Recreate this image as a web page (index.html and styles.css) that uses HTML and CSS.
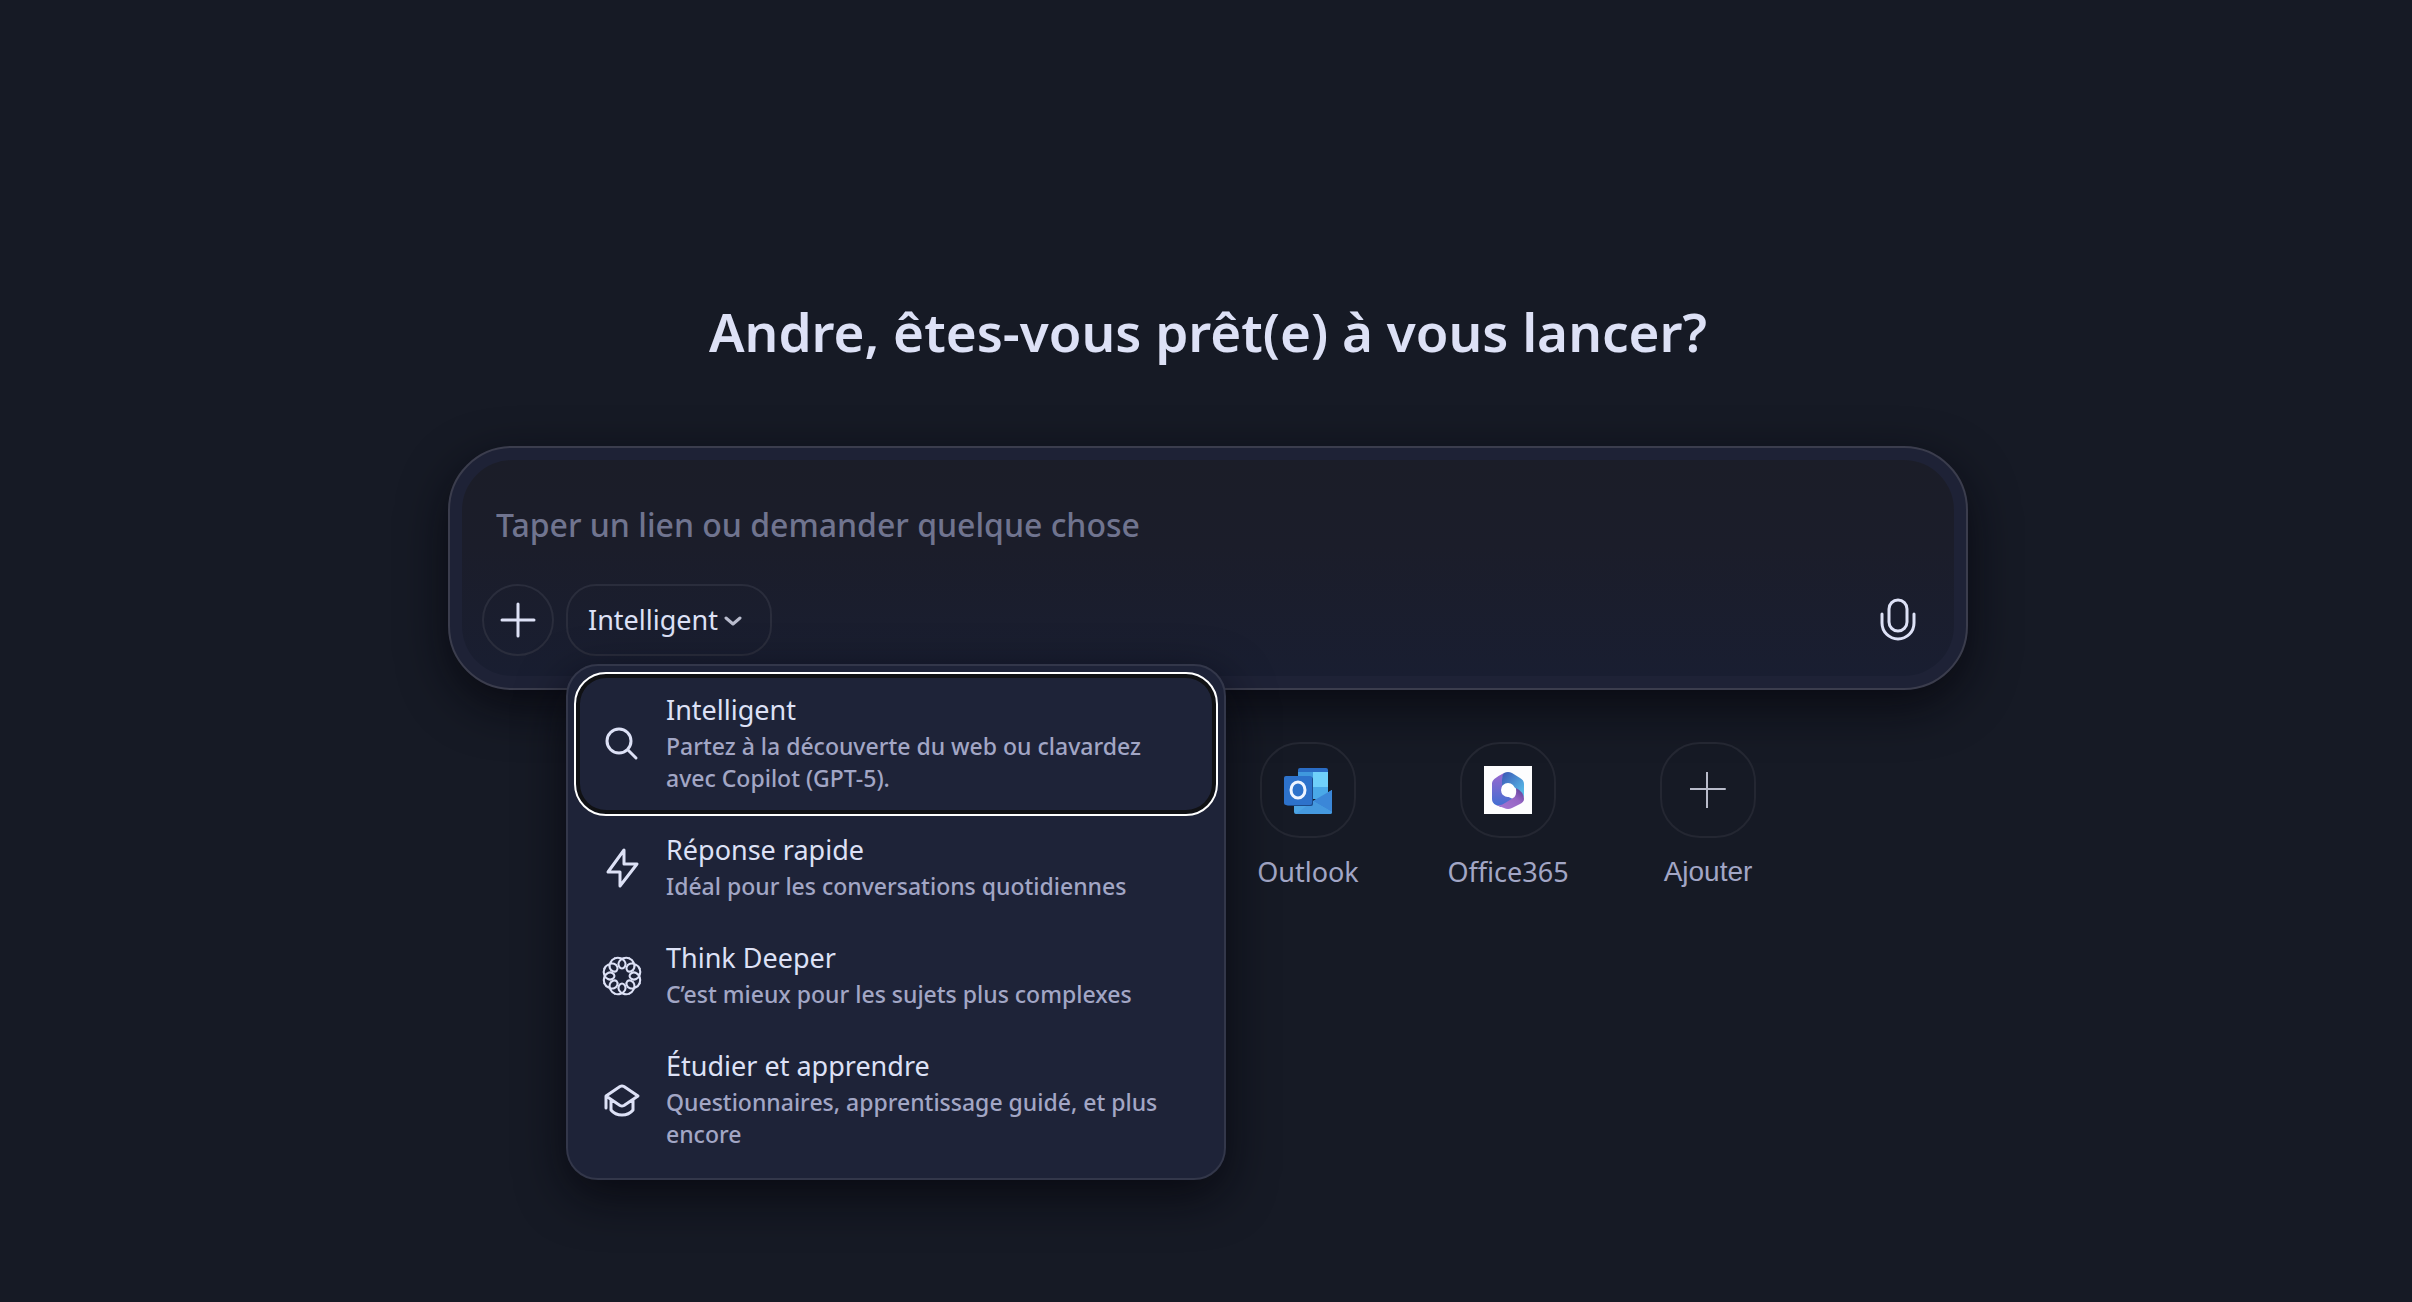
FILE: index.html
```html
<!DOCTYPE html>
<html lang="fr">
<head>
<meta charset="utf-8">
<meta name="viewport" content="width=device-width, initial-scale=1">
<title>Nouvel onglet</title>
<link rel="stylesheet" href="styles.css">
</head>
<body>
<main class="page">
  <h1 class="greeting">Andre, êtes-vous prêt(e) à vous lancer?</h1>

  <form class="composer">
    <div class="composer-inner">
      <input class="prompt" type="text" aria-label="Taper un lien ou demander quelque chose" placeholder="Taper un lien ou demander quelque chose">
      <div class="toolbar">
        <button class="add-button" type="button" aria-label="Ajouter un fichier">
          <svg width="36" height="36" viewBox="0 0 36 36" fill="none" stroke="currentColor" stroke-width="3" stroke-linecap="round"><path d="M18 2v32M2 18h32"/></svg>
        </button>
        <div class="mode">
          <button class="mode-button" type="button" aria-haspopup="menu" aria-expanded="true">
            Intelligent
            <svg width="18" height="18" viewBox="0 0 18 18" fill="none" stroke="#b9bccd" stroke-width="3" stroke-linecap="round" stroke-linejoin="round"><path d="M2 7l7 6 7-6"/></svg>
          </button>
          <div class="menu" role="menu">
            <button class="item is-focused" type="button" role="menuitem">
              <svg class="item-icon" viewBox="0 0 44 44"><circle cx="19" cy="19" r="12"/><path d="M28 28l8 8"/></svg>
              <span class="item-text"><span class="item-title">Intelligent</span><span class="item-desc">Partez à la découverte du web ou clavardez avec Copilot (GPT-5).</span></span>
            </button>
            <button class="item" type="button" role="menuitem">
              <svg class="item-icon" viewBox="0 0 44 44"><path d="M24 4L8 26h12v14l17-22H24z"/></svg>
              <span class="item-text"><span class="item-title">Réponse rapide</span><span class="item-desc">Idéal pour les conversations quotidiennes</span></span>
            </button>
            <button class="item" type="button" role="menuitem">
              <svg class="item-icon item-icon-fine" viewBox="-21 -21 42 42">
                <path id="loop" d="M16.8-7C18.4-3.200 16.600 1.500 13.500 2.900C10.500 4.400 7.200 2.400 7.200 0C7.200-2.400 10.500-4.400 13.500-2.900C16.600-1.500 18.400 3.200 16.800 7"/>
                <use href="#loop" transform="rotate(45)"/>
                <use href="#loop" transform="rotate(90)"/>
                <use href="#loop" transform="rotate(135)"/>
                <use href="#loop" transform="rotate(180)"/>
                <use href="#loop" transform="rotate(225)"/>
                <use href="#loop" transform="rotate(270)"/>
                <use href="#loop" transform="rotate(315)"/>
              </svg>
              <span class="item-text"><span class="item-title">Think Deeper</span><span class="item-desc">C’est mieux pour les sujets plus complexes</span></span>
            </button>
            <button class="item" type="button" role="menuitem">
              <svg class="item-icon" viewBox="0 0 44 44"><path d="M20 8.500q2-1 4 0L38 18 24 27.500q-2 1-4 0L6 18zM6 18v12M11 22v10q4 5 11 5t11-5V22"/></svg>
              <span class="item-text"><span class="item-title">Étudier et apprendre</span><span class="item-desc">Questionnaires, apprentissage guidé, et plus encore</span></span>
            </button>
          </div>
        </div>
        <button class="mic-button" type="button" aria-label="Parler">
          <svg width="40" height="44" viewBox="0 0 40 44" fill="none" stroke="currentColor" stroke-width="3" stroke-linecap="round"><rect x="11" y="2" width="18" height="31" rx="9"/><path d="M4 16v9a16 16 0 0 0 32 0v-9"/></svg>
        </button>
      </div>
    </div>
  </form>

  <nav class="shortcuts" aria-label="Raccourcis">
    <a class="shortcut shortcut-first" href="#outlook">
      <span class="tile">
        <svg width="48" height="48" viewBox="0 0 48 48">
          <path d="M14 4q0-2 2-2h26q2 0 2 2v26H14z" fill="#2a6cc4"/>
          <path d="M14 6h15v15H14z" fill="#3f98dd"/><path d="M29 6h15v15H29z" fill="#6fd0fa"/>
          <path d="M14 21h15v12H14z" fill="#2b77cb"/><path d="M29 21h15v12H29z" fill="#4aa9e8"/>
          <path d="M10 24l19 11 19-11v22q0 2-2 2H12q-2 0-2-2z" fill="#4ba3e3"/>
          <path d="M48 24v22L29 35z" fill="#3b87d8"/><path d="M29 35l19 11q0 2-2 2H12z" fill="#4599df"/>
          <rect x="2" y="11" width="27" height="29" rx="2" fill="#1c4b8c"/>
          <rect y="10" width="28" height="29" rx="2" fill="#2d72cb"/>
          <ellipse cx="14" cy="24" rx="7" ry="8" fill="none" stroke="#eef4ff" stroke-width="3"/>
        </svg>
      </span>
      <span class="label">Outlook</span>
    </a>
    <a class="shortcut" href="#office365">
      <span class="tile">
        <svg width="48" height="48" viewBox="0 0 48 48">
          <defs>
            <linearGradient id="violet" x1="0" y1="0" x2="0" y2="1"><stop offset="0" stop-color="#9a68cf"/><stop offset="1" stop-color="#3f6fd2"/></linearGradient>
            <linearGradient id="sky" x1="0" y1="0" x2="1" y2="1"><stop offset="0" stop-color="#3b56b4"/><stop offset="1" stop-color="#5ccaf0"/></linearGradient>
            <linearGradient id="orchid" x1="0" y1="1" x2="1" y2="0"><stop offset="0" stop-color="#a777d4"/><stop offset=".6" stop-color="#9565c4"/><stop offset="1" stop-color="#54398f"/></linearGradient>
          </defs>
          <path d="M0 0h48v48H0z" fill="#fdfdfe"/>
          <path d="M20 7Q8 13 8 17v16q0 4 4 6l5 2 12-8-11-5V17q0-6 2-10z" fill="url(#violet)"/>
          <path d="M20 7q4-2 8 0l8 5q4 2 4 6v14q-1-5-6-8l-7-5q-4-2-9 1v-6q0-5 2-7z" fill="url(#sky)"/>
          <path d="M12 39q5 1 9-2l8-5q4-2 3-10 8 4 8 11 0 3-4 5l-8 4q-4 2-8 0z" fill="url(#orchid)"/>
          <circle cx="24" cy="24" r="7" fill="#fff"/>
        </svg>
      </span>
      <span class="label">Office365</span>
    </a>
    <button class="shortcut" type="button">
      <span class="tile">
        <svg width="36" height="36" viewBox="0 0 36 36" fill="none" stroke="#b9bccb" stroke-width="2" stroke-linecap="round"><path d="M17 0v36M0 17h35"/></svg>
      </span>
      <span class="label label-plain">Ajouter</span>
    </button>
  </nav>
</main>
</body>
</html>
```

FILE: styles.css
```css
* { box-sizing: border-box; }

body {
  margin: 0;
  min-height: 100vh;
  background: #161a25;
  color: #dde1f6;
  font-family: "Noto Sans", "Open Sans", sans-serif;
}

button, input {
  font: inherit;
  color: inherit;
  background: none;
  border: 0;
  padding: 0;
  margin: 0;
}

button { cursor: pointer; }

svg { display: block; flex: none; }

.page {
  display: flex;
  flex-direction: column;
  align-items: center;
  padding: 296px 24px 48px 28px;
}

.greeting {
  margin: 0 0 78px;
  font-size: 53px;
  font-weight: 600;
  line-height: 72px;
  text-align: center;
}

/* Prompt box */
.composer {
  width: 100%;
  max-width: 1520px;
  padding: 12px;
  border: 2px solid #3b3d4d;
  border-radius: 64px;
  background: #1e2236;
  box-shadow: 0 16px 48px rgba(6, 6, 12, .75);
}

.composer-inner {
  display: flex;
  flex-direction: column;
  gap: 32px;
  padding: 36px 20px 20px;
  border-radius: 50px;
  background: linear-gradient(#1b1d28, #1b1d2a 40%, #191e31);
}

.prompt {
  height: 56px;
  padding: 0 14px;
  font-size: 32px;
  font-weight: 500;
  line-height: 48px;
  outline: 0;
}

.prompt::placeholder { color: #70748f; opacity: 1; }

.toolbar { display: flex; gap: 12px; }

.add-button, .mode-button {
  display: flex;
  align-items: center;
  justify-content: center;
  height: 72px;
  border: 2px solid #2a2d3c;
}

.add-button { width: 72px; border-radius: 36px; }

.mode { position: relative; }

.mode-button {
  gap: 6px;
  padding: 0 28px 0 20px;
  border-radius: 30px;
  font-size: 27px;
  line-height: 36px;
}

.mic-button {
  display: grid;
  place-items: center;
  width: 72px;
  height: 72px;
  margin-left: auto;
}

/* Mode menu */
.menu {
  position: absolute;
  z-index: 1;
  top: calc(100% + 8px);
  left: 0;
  width: 660px;
  padding: 8px;
  border: 2px solid #33374a;
  border-radius: 32px;
  background: #1e2338;
  box-shadow: 0 16px 48px rgba(6, 6, 12, .75);
}

.item {
  display: flex;
  align-items: center;
  gap: 22px;
  width: 100%;
  padding: 20px 24px;
  border-radius: 30px;
  text-align: left;
}

.is-focused {
  outline: 2px solid #fff;
  box-shadow: inset 0 0 0 4px #101114;
}

.item-icon {
  width: 44px;
  height: 44px;
  fill: none;
  stroke: #dde1f6;
  stroke-width: 3;
  stroke-linecap: round;
  stroke-linejoin: round;
}

.item-icon-fine { stroke-width: 2; }

.item-text { display: flex; flex-direction: column; gap: 4px; }

.item-title { font-size: 27px; line-height: 32px; }

.item-desc {
  color: #a2a6c5;
  font-size: 23px;
  font-weight: 500;
  line-height: 32px;
}

/* Shortcuts */
.shortcuts {
  display: grid;
  grid-template-columns: repeat(6, 200px);
  margin-top: 52px;
}

.shortcut {
  display: flex;
  flex-direction: column;
  align-items: center;
  gap: 16px;
  color: #a2a6c5;
  text-decoration: none;
}

.shortcut-first { grid-column-start: 4; }

.tile {
  display: grid;
  place-items: center;
  width: 96px;
  height: 96px;
  border: 2px solid #242732;
  border-radius: 40px;
}

.label { font-size: 27px; line-height: 36px; }

.label-plain {
  font-family: "Liberation Sans", Arial, sans-serif;
  font-size: 28px;
}
```
